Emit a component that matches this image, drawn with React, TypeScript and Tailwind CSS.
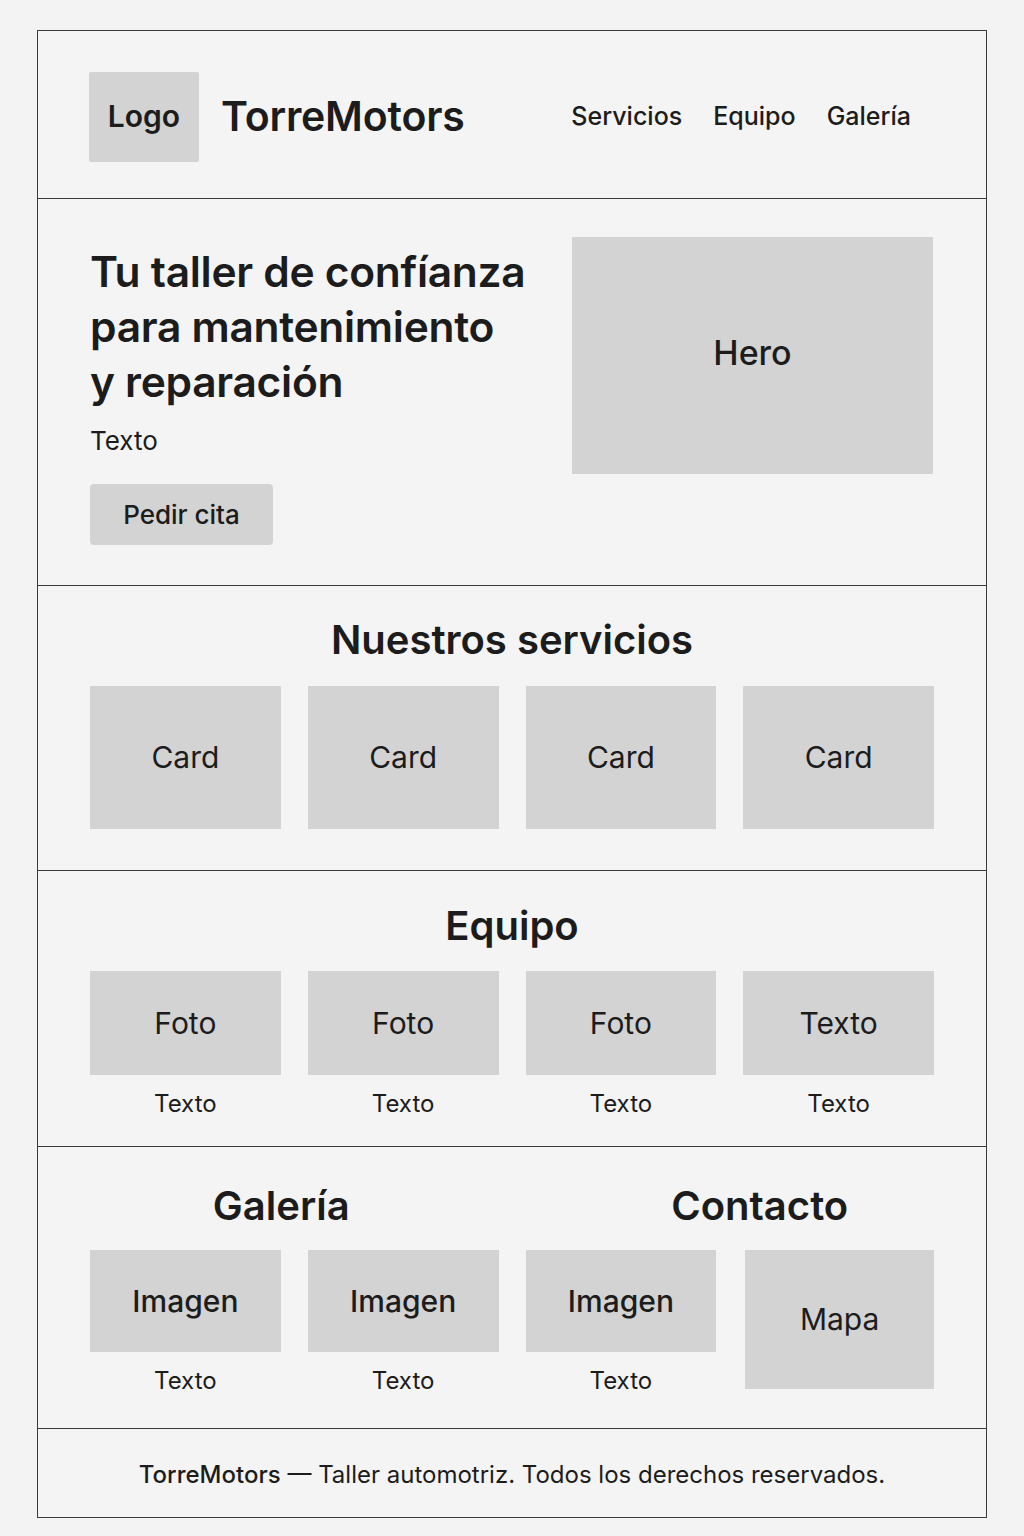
import React from "react";

const box = "bg-[#d3d3d3] flex items-center justify-center text-[#1c1c1c]";

export default function App() {
  const services = ["Card", "Card", "Card", "Card"];
  const team = ["Foto", "Foto", "Foto", "Texto"];

  return (
    <div
      className="min-h-[1536px] w-[1024px] bg-[#f3f3f3] pt-[30px] text-[#1c1c1c]"
      style={{ fontFamily: "Inter, 'Noto Sans', sans-serif" }}
    >
      <div className="ml-[37px] w-[950px] border border-[#3a3a3a] bg-[#f4f4f4]">
        {/* header */}
        <header className="flex h-[168px] items-center border-b border-[#3a3a3a] px-[51px] pt-[4px]">
          <div className={`${box} h-[90px] w-[110px] rounded-[2px] text-[30px] font-semibold`}>Logo</div>
          <div className="ml-[22px] text-[41px] font-semibold tracking-[-0.2px]">TorreMotors</div>
          <nav className="ml-auto mr-[24px] flex items-center gap-[31px] text-[25px] font-medium">
            <a>Servicios</a>
            <a>Equipo</a>
            <a>Galería</a>
          </nav>
        </header>

        {/* hero */}
        <section className="flex h-[387px] items-start justify-between border-b border-[#3a3a3a] px-[52px] pt-[38px]">
          <div className="mt-[7px]">
            <h1 className="text-[42.5px] font-semibold leading-[55px] tracking-[-0.3px]">
              Tu taller de confíanza
              <br />
              para mantenimiento
              <br />y reparación
            </h1>
            <p className="mt-[16px] text-[26px] leading-[32px]">Texto</p>
            <button className={`${box} mt-[27px] h-[61px] w-[183px] rounded-[4px] text-[26px] font-medium`}>
              Pedir cita
            </button>
          </div>
          <div className={`${box} mr-[1px] h-[237px] w-[361px] pb-[6px] text-[34px] font-medium`}>Hero</div>
        </section>

        {/* services */}
        <section className="h-[285px] border-b border-[#3a3a3a] px-[52px] pt-[30px]">
          <h2 className="text-center text-[40px] font-semibold leading-[48px]">Nuestros servicios</h2>
          <div className="mt-[22px] grid grid-cols-4 gap-[27px]">
            {services.map((s, i) => (
              <div key={i} className={`${box} h-[143px] text-[30px]`}>
                {s}
              </div>
            ))}
          </div>
        </section>

        {/* team */}
        <section className="h-[276px] border-b border-[#3a3a3a] px-[52px] pt-[31px]">
          <h2 className="text-center text-[40px] font-semibold leading-[48px]">Equipo</h2>
          <div className="mt-[21px] grid grid-cols-4 gap-[27px]">
            {team.map((t, i) => (
              <div key={i} className="flex flex-col items-center">
                <div className={`${box} h-[104px] w-full text-[30px]`}>{t}</div>
                <p className="mt-[14px] text-[24px] leading-[30px]">Texto</p>
              </div>
            ))}
          </div>
        </section>

        {/* gallery + contact */}
        <section className="h-[282px] border-b border-[#3a3a3a] px-[52px] pt-[35px]">
          <div className="grid grid-cols-2 gap-[27px]">
            <h2 className="pr-[26px] text-center text-[40px] font-semibold leading-[48px]">Galería</h2>
            <h2 className="pl-[60px] text-center text-[40px] font-semibold leading-[48px]">Contacto</h2>
          </div>
          <div className="mt-[20px] grid grid-cols-4 gap-[27px]">
            {[0, 1, 2].map((i) => (
              <div key={i} className="flex flex-col items-center">
                <div className={`${box} h-[102px] w-full text-[30px] font-medium`}>Imagen</div>
                <p className="mt-[14px] text-[24px] leading-[30px]">Texto</p>
              </div>
            ))}
            <div className={`${box} ml-[2px] h-[139px] text-[30px]`}>Mapa</div>
          </div>
        </section>

        {/* footer */}
        <footer className="flex h-[88px] items-center justify-center pt-[3px] text-[24px]">
          <span className="font-medium">TorreMotors</span>
          <span>&nbsp;— Taller automotriz. Todos los derechos reservados.</span>
        </footer>
      </div>
    </div>
  );
}
